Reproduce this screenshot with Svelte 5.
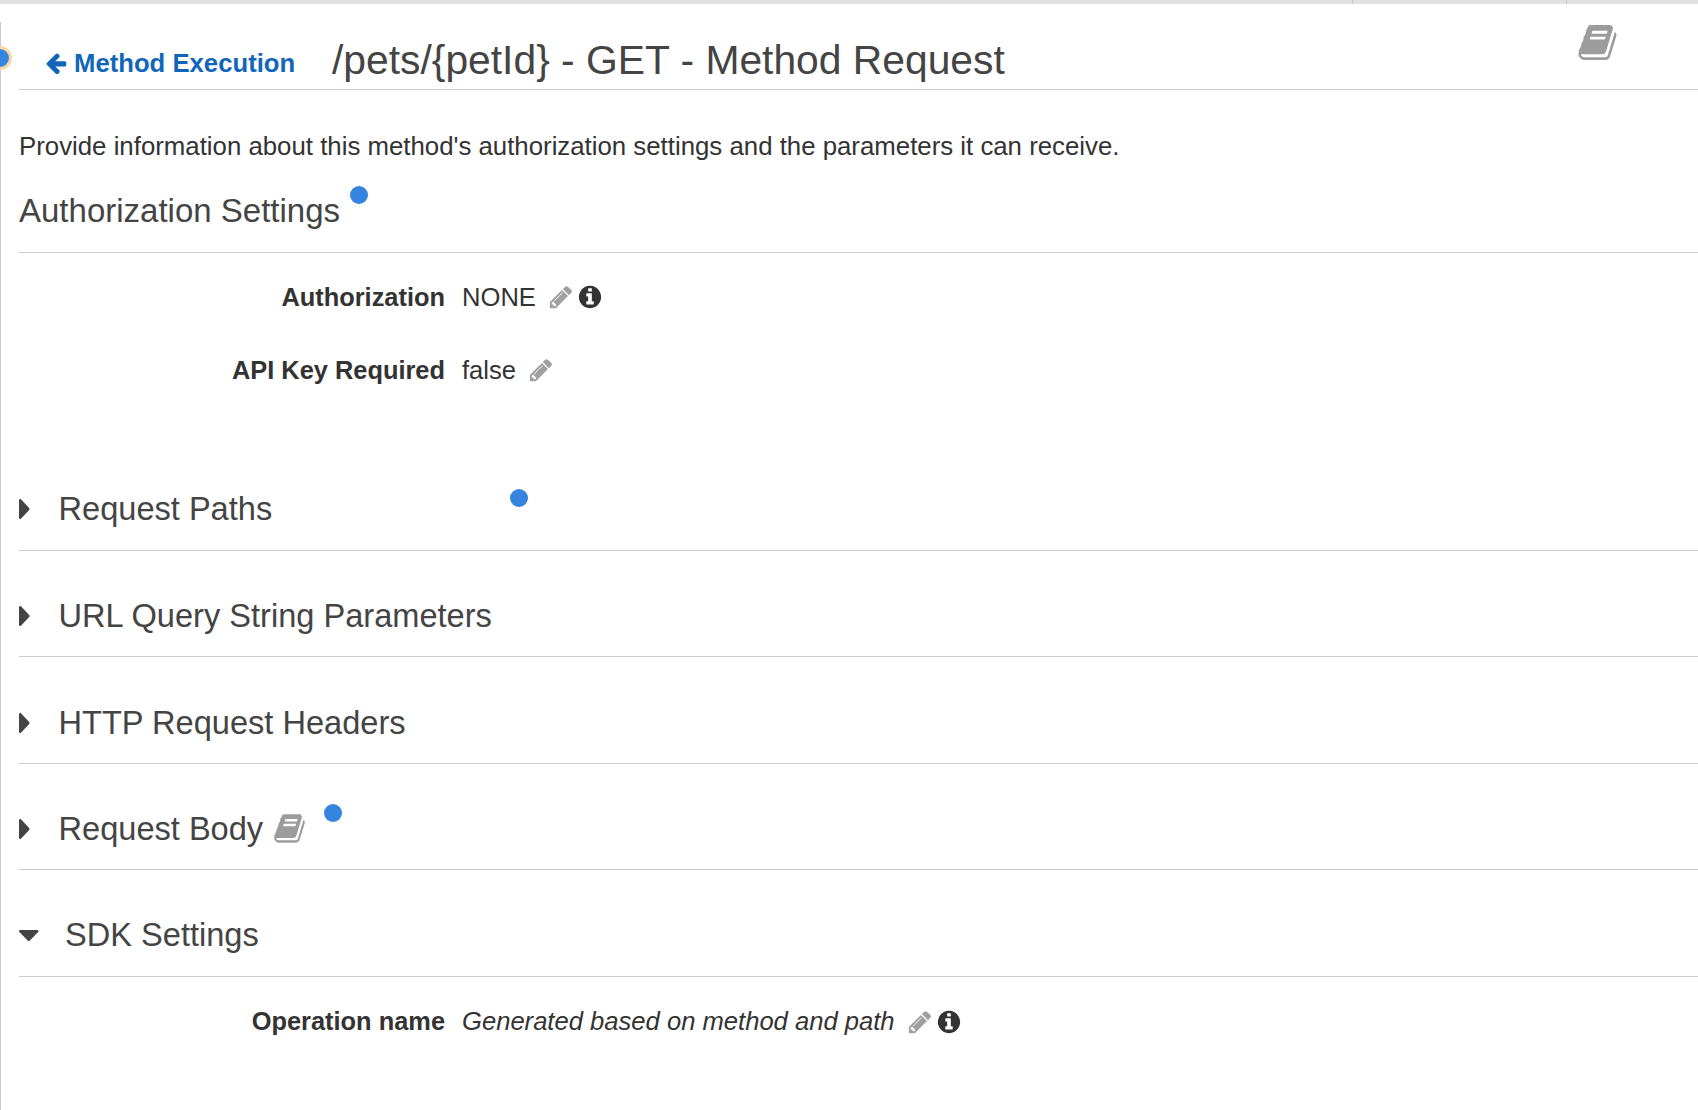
<script>
  const icons = {
    book: "M1703 478q40 57 18 129l-275 906q-19 64-76.5 107.5t-122.5 43.5h-923q-77 0-148.5-53.5t-99.5-131.5q-24-67-2-127 0-4 3-27t4-37q1-8-3-21.5t-3-19.5q2-11 8-21t16.5-23.5 16.5-23.5q23-38 45-91.5t30-91.5q3-10 .5-30t-.5-28q3-11 17-28t17-23q21-36 42-92t25-90q1-9-2.5-32t.5-28q4-13 22-30.5t22-22.5q19-26 42.5-84.5t27.5-96.5q1-8-3-25.5t-2-26.5q2-8 9-18t18-23 17-21q8-12 16.5-30.5t15-35 16-36 19.5-32 26.5-23.5 36-11.5 47.5 5.5l-1 3q38-9 51-9h761q74 0 114 56t18 130l-274 906q-36 119-71.5 153.5t-128.5 34.5h-869q-27 0-38 15-11 16-1 43 24 70 144 70h923q29 0 56-15.5t35-41.5l300-987q7-22 5-57 38 15 59 43zm-1064 2q-4 13 2 22.5t20 9.5h608q13 0 25.5-9.5t16.5-22.5l21-64q4-13-2-22.5t-20-9.5h-608q-13 0-25.5 9.5t-16.5 22.5zm-83 256q-4 13 2 22.5t20 9.5h608q13 0 25.5-9.5t16.5-22.5l21-64q4-13-2-22.5t-20-9.5h-608q-13 0-25.5 9.5t-16.5 22.5z",
    pencil: "M491 1536l91-91-235-235-91 91v107h128v128h107zm523-928q0-22-22-22-10 0-17 7l-542 542q-7 7-7 17 0 22 22 22 10 0 17-7l542-542q7-7 7-17zm-54-192l416 416-832 832h-416v-416zm683 96q0 53-37 90l-166 166-416-416 166-165q36-38 90-38 53 0 91 38l235 234q37 39 37 91z",
    info: "M1152 1376v-160q0-14-9-23t-23-9h-96v-512q0-14-9-23t-23-9h-320q-14 0-23 9t-9 23v160q0 14 9 23t23 9h96v320h-96q-14 0-23 9t-9 23v160q0 14 9 23t23 9h448q14 0 23-9t9-23zm-128-896v-160q0-14-9-23t-23-9h-192q-14 0-23 9t-9 23v160q0 14 9 23t23 9h192q14 0 23-9t9-23zm640 416q0 209-103 385.5t-279.5 279.5-385.5 103-385.5-103-279.5-279.5-103-385.5 103-385.5 279.5-279.5 385.5-103 385.5 103 279.5 279.5 103 385.5z",
    arrow: "M1664 896v128q0 53-32.5 90.5t-84.5 37.5h-704l293 294q38 36 38 90t-38 90l-75 76q-37 37-90 37-52 0-91-37l-651-652q-37-37-37-90 0-52 37-91l651-650q38-38 91-38 52 0 90 38l75 74q38 38 38 91t-38 91l-293 293h704q52 0 84.5 37.5t32.5 90.5z",
    right: "M1152 896q0 26-19 45l-448 448q-19 19-45 19t-45-19-19-45v-896q0-26 19-45t45-19 45 19l448 448q19 19 19 45z",
    down: "M1408 704q0 26-19 45l-448 448q-19 19-45 19t-45-19l-448-448q-19-19-19-45t19-45 45-19h896q26 0 45 19t19 45z"
  };
</script>

<div class="page">
  <div class="topbar"><span class="seg a"></span><span class="seg b"></span></div>
  <main>
    <span class="beacon edge"></span>
    <header>
      <a class="back" href="#top">
        <svg class="ic-arrow" viewBox="0 0 1792 1792"><path d={icons.arrow} /></svg>Method Execution
      </a>
      <h1>/pets/{'{'}petId{'}'} - GET - Method Request</h1>
      <svg class="ic-book big" viewBox="0 0 1792 1792"><path d={icons.book} /></svg>
    </header>

    <p class="intro">Provide information about this method's authorization settings and the parameters it can receive.</p>

    <h2 class="auth">Authorization Settings<span class="beacon b-auth"></span></h2>

    <div class="fields first">
      <div class="row">
        <span class="label">Authorization</span>
        <span class="value">NONE</span>
        <svg class="ic-pencil" viewBox="0 0 1792 1792"><path d={icons.pencil} /></svg>
        <svg class="ic-info" viewBox="0 0 1792 1792"><path d={icons.info} /></svg>
      </div>
      <div class="row">
        <span class="label">API Key Required</span>
        <span class="value">false</span>
        <svg class="ic-pencil" viewBox="0 0 1792 1792"><path d={icons.pencil} /></svg>
      </div>
    </div>

    <section class="sec paths">
      <svg class="caret" viewBox="576 384 576 1024" preserveAspectRatio="none"><path d={icons.right} /></svg>
      <h2>Request Paths</h2><span class="beacon b-paths"></span>
    </section>
    <section class="sec">
      <svg class="caret" viewBox="576 384 576 1024" preserveAspectRatio="none"><path d={icons.right} /></svg>
      <h2>URL Query String Parameters</h2>
    </section>
    <section class="sec">
      <svg class="caret" viewBox="576 384 576 1024" preserveAspectRatio="none"><path d={icons.right} /></svg>
      <h2>HTTP Request Headers</h2>
    </section>
    <section class="sec">
      <svg class="caret" viewBox="576 384 576 1024" preserveAspectRatio="none"><path d={icons.right} /></svg>
      <h2>Request Body</h2>
      <svg class="ic-book small" viewBox="0 0 1792 1792"><path d={icons.book} /></svg>
      <span class="beacon b-body"></span>
    </section>
    <section class="sec">
      <svg class="caret-d" viewBox="384 640 1024 576" preserveAspectRatio="none"><path d={icons.down} /></svg>
      <h2>SDK Settings</h2>
    </section>

    <div class="fields last">
      <div class="row">
        <span class="label">Operation name</span>
        <span class="value em">Generated based on method and path</span>
        <svg class="ic-pencil" viewBox="0 0 1792 1792"><path d={icons.pencil} /></svg>
        <svg class="ic-info" viewBox="0 0 1792 1792"><path d={icons.info} /></svg>
      </div>
    </div>
  </main>
</div>

<style>
  :global(body) { margin: 0; background: #fff; overflow: hidden; }
  .page { height: 1110px; overflow: hidden; font-family: "Liberation Sans", Arial, sans-serif; color: #333; }
  .topbar { display: flex; height: 4px; background: #e0e0e0; }
  .seg { display: block; height: 4px; border-right: 1px solid #c8c8c8; box-sizing: border-box; }
  .seg.a { width: 1353px; }
  .seg.b { width: 214px; }
  main { position: relative; margin-top: 18px; border-left: 1px solid #ccc; padding-left: 18px; height: 1088px; }
  header { position: relative; display: flex; align-items: center; height: 68px; box-sizing: border-box; padding-top: 8px; border-bottom: 1px solid #ccc; }
  .back { display: flex; align-items: center; font-size: 25.7px; font-weight: 700; color: #1166bb; text-decoration: none; margin: 7px 0 0 25px; width: 288px; flex: none; }
  .ic-arrow { width: 24px; height: 24px; fill: #1166bb; margin-right: 6px; }
  h1 { margin: 0; font-size: 40.8px; font-weight: 400; color: #444; line-height: 46px; white-space: nowrap; }
  .ic-book { fill: #9c9c9c; }
  .ic-book.big { position: absolute; left: 1558px; top: 0; width: 41px; height: 41px; }
  .intro { margin: 0; padding-top: 41px; font-size: 25.8px; line-height: 30px; color: #333; white-space: nowrap; }
  h2 { margin: 0; font-size: 32.6px; font-weight: 400; color: #444; line-height: 38px; white-space: nowrap; }
  h2.auth { position: relative; padding-top: 31px; height: 60px; border-bottom: 1px solid #ccc; font-size: 33px; }
  .fields { display: flex; flex-direction: column; gap: 41px; }
  .fields.first { padding-top: 28px; height: 223px; box-sizing: border-box; }
  .fields.last { padding-top: 29px; }
  .row { display: flex; align-items: center; height: 32px; font-size: 25.6px; }
  .label { width: 426px; text-align: right; font-weight: 700; font-size: 25.4px; color: #333; flex: none; }
  .value { margin-left: 17px; }
  .em { font-style: italic; }
  .ic-pencil { width: 26px; height: 26px; fill: #a0a0a0; margin-left: 12px; }
  .ic-info { width: 26px; height: 26px; fill: #333; margin-left: 3px; }
  .sec { position: relative; display: flex; align-items: center; height: 106.4px; box-sizing: border-box; border-bottom: 1px solid #ccc; padding-top: 25px; }
  .sec.paths { height: 75px; padding-top: 0; padding-bottom: 8px; }
  .caret { width: 10.5px; height: 20px; fill: #444; margin-right: 29px; flex: none; }
  .caret-d { width: 19.5px; height: 11px; fill: #444; margin-right: 26.5px; flex: none; }
  .ic-book.small { width: 33px; height: 33px; margin-left: 10px; }
  .beacon { position: absolute; width: 18px; height: 18px; border-radius: 50%; background: #3584e0; }
  .edge { left: -10px; top: 27px; box-shadow: 0 0 0 3px #fbd9a6; }
  .b-auth { left: 331px; top: 25px; }
  .b-paths { left: 491px; top: 13px; }
  .b-body { left: 305px; top: 40px; }
</style>
